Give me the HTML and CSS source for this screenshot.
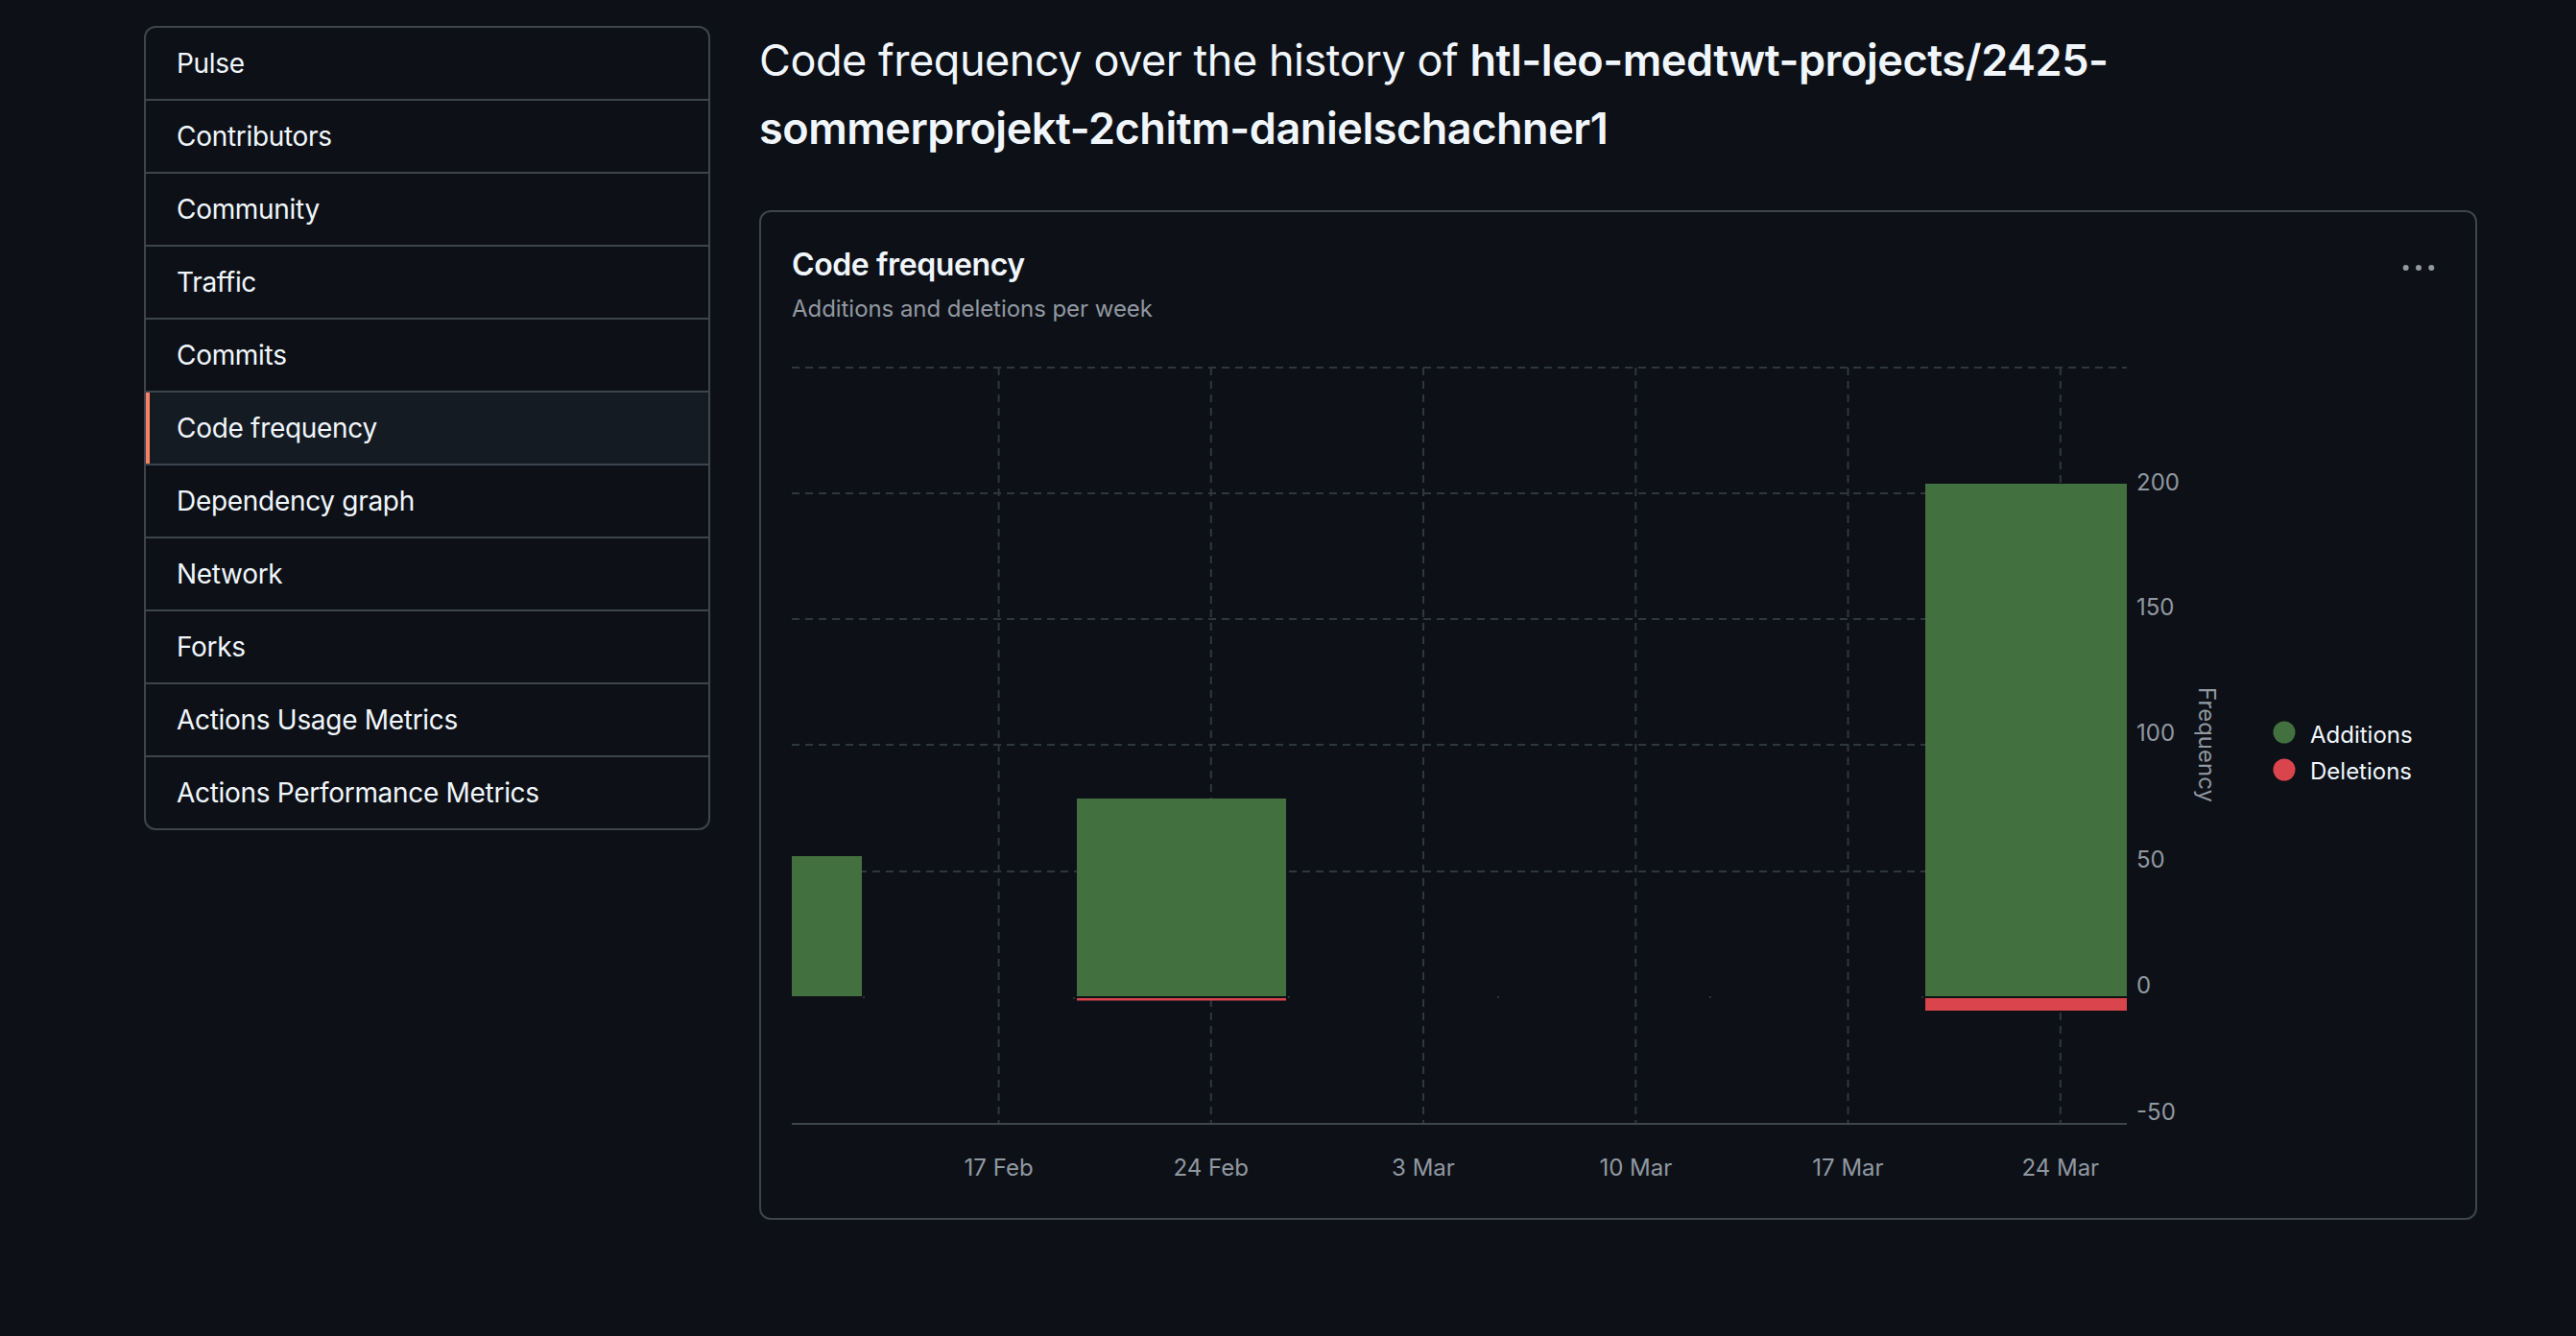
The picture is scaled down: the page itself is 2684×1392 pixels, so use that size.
FILE: index.html
```
<!DOCTYPE html>
<html lang="en">
<head>
    <meta charset="UTF-8">
    <meta name="viewport" content="width=device-width, initial-scale=1.0">
    <title>Code frequency</title>
    <link rel="stylesheet" href="styles.css">
</head>
<body>
    <div class="layout">
        <nav class="menu">
            <a class="menu-item" href="#">Pulse</a>
            <a class="menu-item" href="#">Contributors</a>
            <a class="menu-item" href="#">Community</a>
            <a class="menu-item" href="#">Traffic</a>
            <a class="menu-item" href="#">Commits</a>
            <a class="menu-item selected" href="#">Code frequency</a>
            <a class="menu-item" href="#">Dependency graph</a>
            <a class="menu-item" href="#">Network</a>
            <a class="menu-item" href="#">Forks</a>
            <a class="menu-item" href="#">Actions Usage Metrics</a>
            <a class="menu-item" href="#">Actions Performance Metrics</a>
        </nav>

        <main class="content">
            <h2 class="page-title">Code frequency over the history of <strong>htl-leo-medtwt-projects/2425-sommerprojekt-2chitm-danielschachner1</strong></h2>

            <section class="card">
                <div class="card-header">
                    <div>
                        <h3 class="card-title">Code frequency</h3>
                        <p class="card-subtitle">Additions and deletions per week</p>
                    </div>
                    <button class="kebab" aria-label="Chart options">
                        <svg width="40" height="12" viewBox="0 0 40 12">
                            <circle cx="6.7" cy="6" r="3"/>
                            <circle cx="20" cy="6" r="3"/>
                            <circle cx="33.3" cy="6" r="3"/>
                        </svg>
                    </button>
                </div>

                <svg class="chart" width="1722" height="881" viewBox="0 0 1722 881">
                    <!-- grid -->
                    <g class="grid">
                        <line x1="0" y1="27" x2="1391" y2="27"/>
                        <line x1="0" y1="158" x2="1391" y2="158"/>
                        <line x1="0" y1="289" x2="1391" y2="289"/>
                        <line x1="0" y1="420" x2="1391" y2="420"/>
                        <line x1="0" y1="552" x2="1391" y2="552"/>
                        <line x1="215.6" y1="27" x2="215.6" y2="815"/>
                        <line x1="436.8" y1="27" x2="436.8" y2="815"/>
                        <line x1="658" y1="27" x2="658" y2="815"/>
                        <line x1="879.3" y1="27" x2="879.3" y2="815"/>
                        <line x1="1100.5" y1="27" x2="1100.5" y2="815"/>
                        <line x1="1321.8" y1="27" x2="1321.8" y2="815"/>
                    </g>
                    <line class="axis" x1="0" y1="815" x2="1391" y2="815"/>

                    <!-- bars -->
                    <g class="additions">
                        <rect x="0" y="536" width="73" height="146"/>
                        <rect x="297" y="476" width="218" height="206"/>
                        <rect x="1181" y="148" width="210" height="534"/>
                    </g>
                    <g class="deletions">
                        <rect x="297" y="684" width="218" height="2.5"/>
                        <rect x="1181" y="684" width="210" height="13"/>
                    </g>
                    <g class="empty">
                        <rect x="74" y="682" width="2" height="2"/>
                        <rect x="293" y="683" width="2" height="2"/>
                        <rect x="517" y="682" width="2" height="2"/>
                        <rect x="735" y="682" width="2" height="2"/>
                        <rect x="956" y="682" width="2" height="2"/>
                        <rect x="1177" y="682" width="2" height="2"/>
                    </g>

                    <!-- y axis -->
                    <g class="tick y-tick">
                        <text x="1401" y="146">200</text>
                        <text x="1401" y="276">150</text>
                        <text x="1401" y="407">100</text>
                        <text x="1401" y="539">50</text>
                        <text x="1401" y="670">0</text>
                        <text x="1401" y="802">-50</text>
                    </g>
                    <text class="tick axis-title" transform="translate(1474 420) rotate(90)">Frequency</text>

                    <!-- x axis -->
                    <g class="tick x-tick">
                        <text x="215.6" y="860">17 Feb</text>
                        <text x="436.8" y="860">24 Feb</text>
                        <text x="658" y="860">3 Mar</text>
                        <text x="879.3" y="860">10 Mar</text>
                        <text x="1100.5" y="860">17 Mar</text>
                        <text x="1321.8" y="860">24 Mar</text>
                    </g>

                    <!-- legend -->
                    <g class="legend">
                        <circle cx="1555" cy="407" r="11.5" fill="#42703f"/>
                        <text x="1582" y="409">Additions</text>
                        <circle cx="1555" cy="446" r="11.5" fill="#da444c"/>
                        <text x="1582" y="447">Deletions</text>
                    </g>
                </svg>
            </section>
        </main>
    </div>
</body>
</html>
```

FILE: styles.css
```
/* Base */
body {
    margin: 0;
    background: #0d1117;
    color: #f0f6fc;
    font-family: 'Inter', 'Liberation Sans', sans-serif;
}

.layout {
    display: grid;
    grid-template-columns: 590px 1790px;
    column-gap: 51px;
    padding: 27px 0 0 150px;
    align-items: start;
}

/* Side menu */
.menu {
    display: flex;
    flex-direction: column;
    border: 2px solid #3d444d;
    border-radius: 12px;
    overflow: hidden;
}

.menu-item {
    display: flex;
    align-items: center;
    height: 74px;
    padding: 0 32px;
    color: #f0f6fc;
    text-decoration: none;
    font-size: 28px;
    letter-spacing: -0.3px;
    border-top: 2px solid #3d444d;
}

.menu-item:first-child {
    border-top: none;
}

.menu-item.selected {
    background: #151b23;
    box-shadow: inset 4px 0 0 #f78166;
}

/* Main column */
.page-title {
    margin: 0 0 50px;
    max-width: 1500px;
    font-size: 45px;
    line-height: 71px;
    font-weight: 400;
    letter-spacing: -0.45px;
}

.page-title strong {
    font-weight: 600;
}

.card {
    border: 2px solid #3d444d;
    border-radius: 12px;
    padding: 32px;
}

.card-header {
    display: flex;
    justify-content: space-between;
    align-items: flex-start;
}

.card-title {
    margin: 0;
    font-size: 32px;
    line-height: 46px;
    font-weight: 600;
    letter-spacing: -0.4px;
}

.card-subtitle {
    margin: 5px 0 0;
    font-size: 24px;
    line-height: 36px;
    color: #9198a1;
    letter-spacing: -0.05px;
}

.kebab {
    width: 54px;
    height: 46px;
    margin-top: 3px;
    padding: 0;
    border: none;
    background: none;
    fill: #9198a1;
    display: flex;
    align-items: center;
    justify-content: center;
}

/* Chart */
.chart {
    display: block;
    margin-top: 16px;
    font-family: 'Inter', 'Liberation Sans', sans-serif;
}

.grid line {
    stroke: #30363d;
    stroke-width: 2;
    stroke-dasharray: 8 6;
}

.axis {
    stroke: #3d444d;
    stroke-width: 2;
}

.additions rect {
    fill: #42703f;
}

.deletions rect {
    fill: #da444c;
}

.empty rect {
    fill: #2d333b;
}

.tick {
    fill: #9198a1;
    font-size: 24px;
    dominant-baseline: central;
}

.x-tick text,
.axis-title {
    text-anchor: middle;
}

.legend text {
    fill: #f0f6fc;
    font-size: 24px;
    dominant-baseline: central;
}
```
